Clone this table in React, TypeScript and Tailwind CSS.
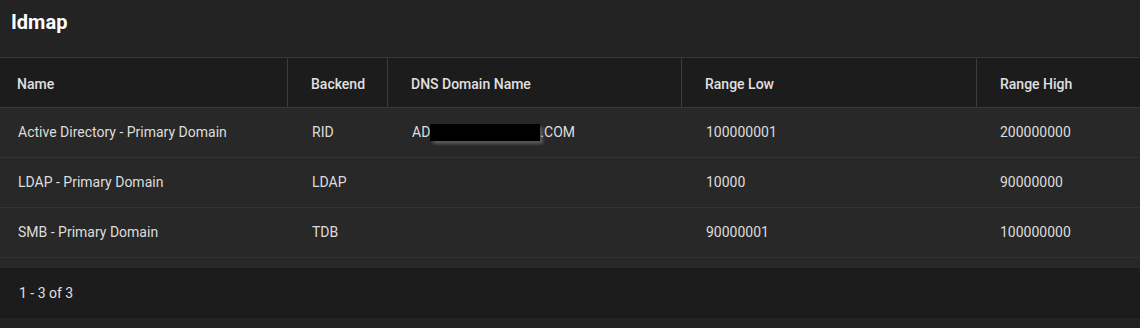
import React from "react";

const rows = [
  { name: "Active Directory - Primary Domain", backend: "RID", dns: true, low: "100000001", high: "200000000" },
  { name: "LDAP - Primary Domain", backend: "LDAP", dns: false, low: "10000", high: "90000000" },
  { name: "SMB - Primary Domain", backend: "TDB", dns: false, low: "90000001", high: "100000000" },
];

const grid = "grid grid-cols-[287px_100px_294px_295px_1fr]";

export default function App() {
  return (
    <div className="w-[1140px] h-[328px] bg-[#232323] text-[#dddddd] overflow-hidden" style={{ fontFamily: "Roboto, 'Liberation Sans', sans-serif" }}>
      <div className="h-[58px] border-b border-[#373737] px-[11px] pt-[9px]">
        <h1 className="text-[20px] font-bold text-white leading-[26px]">Idmap</h1>
      </div>
      <div className={`${grid} h-[50px] bg-[#1c1c1c] border-b border-[#373737] text-[14px] font-medium text-[#e0e0e0]`}>
        <div className="flex items-center pl-[17px] pt-[3px]">Name</div>
        <div className="flex items-center pl-[23px] pt-[3px] border-l border-[#3c3c3c]">Backend</div>
        <div className="flex items-center pl-[23px] pt-[3px] border-l border-[#3c3c3c]">DNS Domain Name</div>
        <div className="flex items-center pl-[23px] pt-[3px] border-l border-[#3c3c3c]">Range Low</div>
        <div className="flex items-center pl-[23px] pt-[3px] border-l border-[#3c3c3c]">Range High</div>
      </div>
      {rows.map((r) => (
        <div key={r.name} className={`${grid} h-[50px] bg-[#282828] border-b border-[#333333] text-[14px]`}>
          <div className="flex items-center pl-[18px]">{r.name}</div>
          <div className="flex items-center pl-[25px]">{r.backend}</div>
          <div className="flex items-center pl-[25px]">
            {r.dns && (
              <>
                <span>AD</span>
                <span className="inline-block w-[110px] h-[17px] bg-black shadow-[3px_3px_3px_rgba(120,120,120,0.6)]" />
                <span>.COM</span>
              </>
            )}
          </div>
          <div className="flex items-center pl-[25px]">{r.low}</div>
          <div className="flex items-center pl-[24px]">{r.high}</div>
        </div>
      ))}
      <div className="h-[10px] bg-[#282828]" />
      <div className="h-[50px] bg-[#1c1c1c] border-b border-[#181818] flex items-center pl-[19px] pt-[2px] text-[14px] text-[#e0e0e0]">
        1 - 3 of 3
      </div>
    </div>
  );
}
